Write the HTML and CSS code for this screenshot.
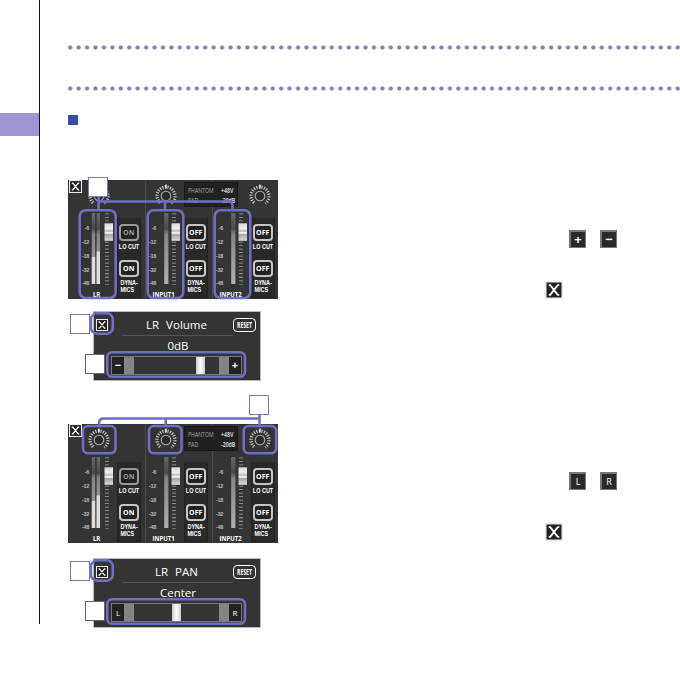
FILE: index.html
```html
<!DOCTYPE html>
<html lang="en">

<head>
    <meta charset="UTF-8">
    <meta name="viewport" content="width=device-width, initial-scale=1.0">
    <title>LR Volume / LR PAN</title>
    <link rel="stylesheet" href="styles.css">
</head>

<body>

    <!-- shared drawings -->
    <svg class="defs" width="0" height="0">
        <symbol id="close" viewBox="0 0 12 12">
            <rect x=".5" y=".5" width="11" height="11" fill="#222" stroke="#eee" />
            <path d="M2.5 2.8h1L8.5 9.2h1M9.5 2.8h-1L3.5 9.2h-1" fill="none" stroke="#fff" stroke-width="1.2" />
        </symbol>
        <symbol id="knob" viewBox="0 0 26 26">
            <circle cx="13" cy="14" r="9" fill="none" stroke="#ccc" stroke-width="3.2" stroke-dasharray="1.1 1.4" pathLength="55" transform="rotate(132 13 14)" />
            <path d="M13 14L5 25h16z" fill="#353435" />
            <circle cx="13" cy="14" r="4.8" fill="#2c2b2c" stroke="#aaa" stroke-width="1.1" />
            <path d="M13 2.5v4" stroke="#eee" stroke-width="1.4" />
        </symbol>
        <linearGradient id="level" x2="0" y2="1">
            <stop offset="0" stop-color="#6a6a6a" />
            <stop offset=".22" stop-color="#4a4a4a" />
            <stop offset=".3" stop-color="#858585" />
            <stop offset="1" stop-color="#b0aeae" />
        </linearGradient>
        <linearGradient id="cap" x2="0" y2="1">
            <stop offset="0" stop-color="#d8d8d8" />
            <stop offset=".3" stop-color="#eee" />
            <stop offset=".45" stop-color="#bbb" />
            <stop offset=".55" stop-color="#fff" />
            <stop offset=".65" stop-color="#a5a5a5" />
            <stop offset="1" stop-color="#ddd" />
        </linearGradient>
        <symbol id="fader" viewBox="0 0 38 76" overflow="visible">
            <g class="scale">
                <text x="10" y="19.5">-6</text>
                <text x="10" y="33.5">-12</text>
                <text x="10" y="47.5">-18</text>
                <text x="10" y="61.5">-32</text>
                <text x="10" y="75">-48</text>
            </g>
            <path d="M28 3.5v71" stroke="#a5a5a5" stroke-width="4" stroke-dasharray=".8 2.72" />
            <rect x="25.5" y="13.3" width="8.5" height="17.5" fill="url(#cap)" />
        </symbol>
        <symbol id="mono" viewBox="0 0 38 76" overflow="visible">
            <rect x="18.2" y="3" width="4.2" height="71" fill="url(#level)" />
            <use href="#fader" width="38" height="76" />
        </symbol>
        <symbol id="stereo" viewBox="0 0 38 76" overflow="visible">
            <rect x="12.8" y="3" width="3.4" height="71" fill="url(#level)" />
            <rect x="17.6" y="3" width="3.4" height="71" fill="url(#level)" />
            <path d="M14.5 47v27M19.3 41.5V74" stroke="#e0dddd" stroke-width="3.4" />
            <use href="#fader" width="38" height="76" />
        </symbol>
    </svg>

    <div class="page">
        <aside class="sidebar">
            <div class="tab"></div>
        </aside>

        <main class="content">
            <div class="dots"></div>
            <div class="dots"></div>
            <div class="bullet"></div>

            <section class="topic">
                <div class="figure">
                    <div class="mixer">
                        <div class="channel master">
                            <div class="top"><svg class="knob"><use href="#knob" /></svg></div>
                            <div class="strip"><svg class="fader"><use href="#stereo" /></svg><span class="name">LR</span></div>
                            <div class="switches">
                                <b class="key dim">ON</b><span>LO CUT</span>
                                <b class="key">ON</b><span>DYNA-<br>MICS</span>
                            </div>
                        </div>
                        <div class="channel">
                            <div class="top"><svg class="knob"><use href="#knob" /></svg></div>
                            <div class="strip"><svg class="fader"><use href="#mono" /></svg><span class="name">INPUT1</span></div>
                            <div class="switches">
                                <b class="key">OFF</b><span>LO CUT</span>
                                <b class="key">OFF</b><span>DYNA-<br>MICS</span>
                            </div>
                        </div>
                        <div class="channel last">
                            <div class="top"><svg class="knob"><use href="#knob" /></svg></div>
                            <div class="strip"><svg class="fader"><use href="#mono" /></svg><span class="name">INPUT2</span></div>
                            <div class="switches">
                                <b class="key">OFF</b><span>LO CUT</span>
                                <b class="key">OFF</b><span>DYNA-<br>MICS</span>
                            </div>
                        </div>
                        <svg class="mixer-close"><use href="#close" /></svg>
                        <div class="phantom">
                            <span>PHANTOM</span><span class="value">+48V</span>
                            <span>PAD</span><span class="value">-20dB</span>
                        </div>
                        <svg class="lines" width="230" height="160" viewBox="58 140 230 160">
                            <path d="M98.5 197v12M98.5 201.5H228q4.5 0 4.5 4.5v4M165 201.5v8" />
                            <rect x="79.7" y="210.2" width="36" height="87.8" rx="6" />
                            <rect x="147.7" y="210.2" width="35.6" height="87.8" rx="6" />
                            <rect x="214.7" y="210.2" width="35.6" height="87.8" rx="6" />
                            <rect class="box" x="88.5" y="177.5" width="19" height="19" />
                        </svg>
                    </div>

                    <div class="dialog">
                        <div class="title">
                            <svg class="x"><use href="#close" /></svg>
                            <span class="text">LR Volume</span>
                            <span class="reset"><i>RESET</i></span>
                        </div>
                        <div class="reading">0dB</div>
                        <div class="slider">
                            <b class="end">−</b><i class="thumb"></i><b class="end right">+</b>
                        </div>
                        <svg class="marks" width="192" height="70" viewBox="69 311 192 70">
                            <rect class="box" x="70.5" y="314.5" width="19" height="19" />
                            <rect x="91" y="313.3" width="21.8" height="20.4" rx="6" />
                            <rect x="107.2" y="352.2" width="137.8" height="24.6" rx="5" />
                            <rect class="box grey" x="85.5" y="354.5" width="19" height="19" />
                        </svg>
                    </div>
                </div>

                <div class="notes">
                    <div class="buttons"><b class="chip">+</b><b class="chip">−</b></div>
                    <svg class="chip-close"><use href="#close" /></svg>
                </div>
            </section>

            <section class="topic">
                <div class="figure">
                    <div class="mixer">
                        <div class="channel master">
                            <div class="top"><svg class="knob"><use href="#knob" /></svg></div>
                            <div class="strip"><svg class="fader"><use href="#stereo" /></svg><span class="name">LR</span></div>
                            <div class="switches">
                                <b class="key dim">ON</b><span>LO CUT</span>
                                <b class="key">ON</b><span>DYNA-<br>MICS</span>
                            </div>
                        </div>
                        <div class="channel">
                            <div class="top"><svg class="knob"><use href="#knob" /></svg></div>
                            <div class="strip"><svg class="fader"><use href="#mono" /></svg><span class="name">INPUT1</span></div>
                            <div class="switches">
                                <b class="key">OFF</b><span>LO CUT</span>
                                <b class="key">OFF</b><span>DYNA-<br>MICS</span>
                            </div>
                        </div>
                        <div class="channel last">
                            <div class="top"><svg class="knob"><use href="#knob" /></svg></div>
                            <div class="strip"><svg class="fader"><use href="#mono" /></svg><span class="name">INPUT2</span></div>
                            <div class="switches">
                                <b class="key">OFF</b><span>LO CUT</span>
                                <b class="key">OFF</b><span>DYNA-<br>MICS</span>
                            </div>
                        </div>
                        <svg class="mixer-close"><use href="#close" /></svg>
                        <div class="phantom">
                            <span>PHANTOM</span><span class="value">+48V</span>
                            <span>PAD</span><span class="value">-20dB</span>
                        </div>
                        <svg class="lines" width="230" height="160" viewBox="58 384 230 160">
                            <path d="M99.2 425v-2q0-4.5 4.5-4.5H260M165.7 418.5v7M259.5 415v10" />
                            <rect x="83" y="426" width="32.5" height="27.3" rx="5" />
                            <rect x="149" y="426" width="32.5" height="27.3" rx="5" />
                            <rect x="243.7" y="426" width="32.5" height="27.3" rx="5" />
                            <rect class="box" x="249.5" y="395.5" width="19" height="19" />
                        </svg>
                    </div>

                    <div class="dialog pan">
                        <div class="title">
                            <svg class="x"><use href="#close" /></svg>
                            <span class="text">LR PAN</span>
                            <span class="reset"><i>RESET</i></span>
                        </div>
                        <div class="reading">Center</div>
                        <div class="slider">
                            <b class="end letter">L</b><i class="thumb"></i><b class="end letter right">R</b>
                        </div>
                        <svg class="marks" width="192" height="70" viewBox="69 311 192 70">
                            <rect class="box" x="70.5" y="314.5" width="19" height="19" />
                            <rect x="91" y="313.3" width="21.8" height="20.4" rx="6" />
                            <rect x="107.2" y="352.2" width="137.8" height="24.6" rx="5" />
                            <rect class="box grey" x="85.5" y="354.5" width="19" height="19" />
                        </svg>
                    </div>
                </div>

                <div class="notes pan-notes">
                    <div class="buttons"><b class="chip letter">L</b><b class="chip letter">R</b></div>
                    <svg class="chip-close"><use href="#close" /></svg>
                </div>
            </section>
        </main>
    </div>

</body>

</html>
```
FILE: styles.css
```css
* {
    margin: 0;
    padding: 0;
    box-sizing: border-box;
}

body {
    background: #fff;
    color: #fff;
    font-family: "Open Sans", "Noto Sans", sans-serif;
}

svg {
    display: block;
}

.defs {
    position: absolute;
}

.page {
    display: flex;
    height: 680px;
    overflow: hidden;
}

.sidebar {
    width: 40px;
    height: 624px;
    padding-top: 113px;
    border-right: 1px solid #111;
}

.tab {
    height: 23px;
    background: #9c97d4;
}

.content {
    flex: 1;
    padding: 45px 0 0 28px;
}

.dots {
    height: 5px;
    margin-bottom: 36px;
    margin-left: -2px;
    background: radial-gradient(circle at 4.2px 2.5px, #8580bd 1.7px, transparent 2.5px) 0 0 / 8.445px 5px repeat-x;
}

.bullet {
    width: 10px;
    height: 10px;
    margin: -12px 0 55px;
    background: #344da8;
}

.topic {
    display: flex;
    height: 244px;
}

.figure {
    width: 210px;
}

/* mixer screen */
.mixer {
    position: relative;
    display: flex;
    height: 119px;
    background: #353435;
}

.channel {
    display: grid;
    grid-template-columns: 38.5px 23.5px;
    grid-template-rows: 30px 89px;
    width: 67px;
    border-right: 1px solid #4b4a4b;
}

.channel.master {
    width: 77.5px;
    padding-left: 10.5px;
}

.channel.last {
    width: 65.5px;
    border-right: 0;
}

.top {
    grid-column: 1 / 3;
    padding: 2px 0 0 7px;
}

.last .top {
    padding-left: 34px;
}

.knob {
    width: 26px;
    height: 26px;
}

.fader {
    width: 38px;
    height: 76px;
    overflow: visible;
}

.scale {
    font: bold 5.5px "Liberation Sans", sans-serif;
    fill: #bbb;
    text-anchor: end;
    letter-spacing: -.3px;
}

.strip {
    text-align: center;
}

.name {
    display: block;
    font-size: 7.5px;
    font-weight: 700;
    line-height: 8px;
    margin-top: 4px;
    padding-right: 4px;
    transform: scaleX(.8);
}

.switches {
    display: flex;
    flex-direction: column;
    align-items: center;
    height: 80px;
    margin-top: 8px;
    padding-top: 6px;
    background: #2a292a;
    border: 1px solid #222;
    border-top: 0;
}

.switches span {
    height: 19px;
    padding-top: 2px;
    font-family: "Liberation Sans", sans-serif;
    font-size: 7px;
    font-weight: 700;
    line-height: 7px;
    white-space: nowrap;
    transform: scaleX(.78);
}

.key {
    flex: none;
    width: 20px;
    height: 17px;
    border: 2px solid #c5c4c5;
    border-radius: 4px;
    background: #222;
    font-size: 7px;
    line-height: 13px;
    text-align: center;
}

.key.dim {
    border-color: #999;
    color: #999;
}

.mixer-close {
    position: absolute;
    left: 1px;
    top: 0;
    width: 13px;
    height: 13px;
}

.phantom {
    position: absolute;
    left: 116px;
    top: 2px;
    display: grid;
    grid-template-columns: 33px 20px;
    width: 54px;
    height: 25px;
    padding: 3px 0 0 3px;
    background: #222122;
    border: 1px solid #191819;
    color: #aaa;
    font-size: 7px;
    line-height: 10px;
}

.phantom span {
    width: 34px;
    transform: scaleX(.74);
    transform-origin: 0 0;
}

.phantom .value {
    width: 20px;
    font-weight: 700;
    color: #ccc;
}

.lines {
    position: absolute;
    left: -10px;
    top: -40px;
}

.lines,
.marks {
    fill: none;
    stroke: #6d6fc2;
    stroke-width: 2.6;
}

.box {
    fill: #fff;
    stroke: #7478bd;
    stroke-width: 1;
}

.box.grey {
    stroke: #666;
}

/* dialog */
.dialog {
    position: relative;
    width: 168px;
    height: 70px;
    margin: 12px 0 0 25px;
    border: 1px solid #bbb;
    background: #353435;
}

.dialog.pan {
    margin-top: 15px;
}

.title {
    display: flex;
    align-items: center;
    height: 23px;
    padding: 2px 4px 0 2px;
}

.x {
    width: 12px;
    height: 14px;
}

.title .text {
    flex: 1;
    padding-left: 12px;
    font-size: 11.5px;
    line-height: 20px;
    text-align: center;
    word-spacing: 4px;
}

.reset {
    width: 23px;
    height: 14px;
    border: 1px solid #fff;
    border-radius: 4px;
    font-size: 8.5px;
    font-weight: 700;
    line-height: 12px;
    text-align: center;
}

.reset i {
    display: block;
    margin: 0 -5px;
    font-style: normal;
    transform: scaleX(.6);
}

.reading {
    width: 110px;
    height: 21px;
    margin-left: 29px;
    border-top: 1px solid #555;
    font-size: 11.5px;
    line-height: 19px;
    text-align: center;
}

.slider {
    display: flex;
    width: 131px;
    height: 19px;
    margin-left: 17px;
    border: 1px solid #777;
    background: #353435;
}

.end {
    flex: none;
    width: 22px;
    border-right: 10px solid #858485;
    background: #222;
    font-size: 11px;
    line-height: 16px;
    text-align: center;
}

.end.right {
    margin-left: auto;
    border-right: 0;
    border-left: 10px solid #858485;
}

.end.letter {
    font-size: 8px;
    font-weight: 400;
    line-height: 17px;
}

.thumb {
    width: 9px;
    margin-left: 62px;
    background: linear-gradient(90deg, #ccc, #fff, #ccc);
}

.pan .thumb {
    margin-left: 38px;
}

.marks {
    position: absolute;
    left: -25px;
    top: -1px;
}

/* buttons next to the figures */
.notes {
    padding: 50px 0 0 267px;
}

.pan-notes {
    padding-top: 48px;
}

.buttons {
    display: flex;
    gap: 14px;
    margin-left: 24px;
}

.chip {
    width: 17px;
    height: 18px;
    border: 1px solid #777;
    border-width: 2px 1px 1px 2px;
    background: #2b2a2b;
    font-size: 13px;
    line-height: 14px;
    text-align: center;
}

.chip.letter {
    font-size: 9px;
    font-weight: 400;
    line-height: 15px;
}

.chip-close {
    width: 18px;
    height: 18px;
    margin-top: 33px;
}
```
